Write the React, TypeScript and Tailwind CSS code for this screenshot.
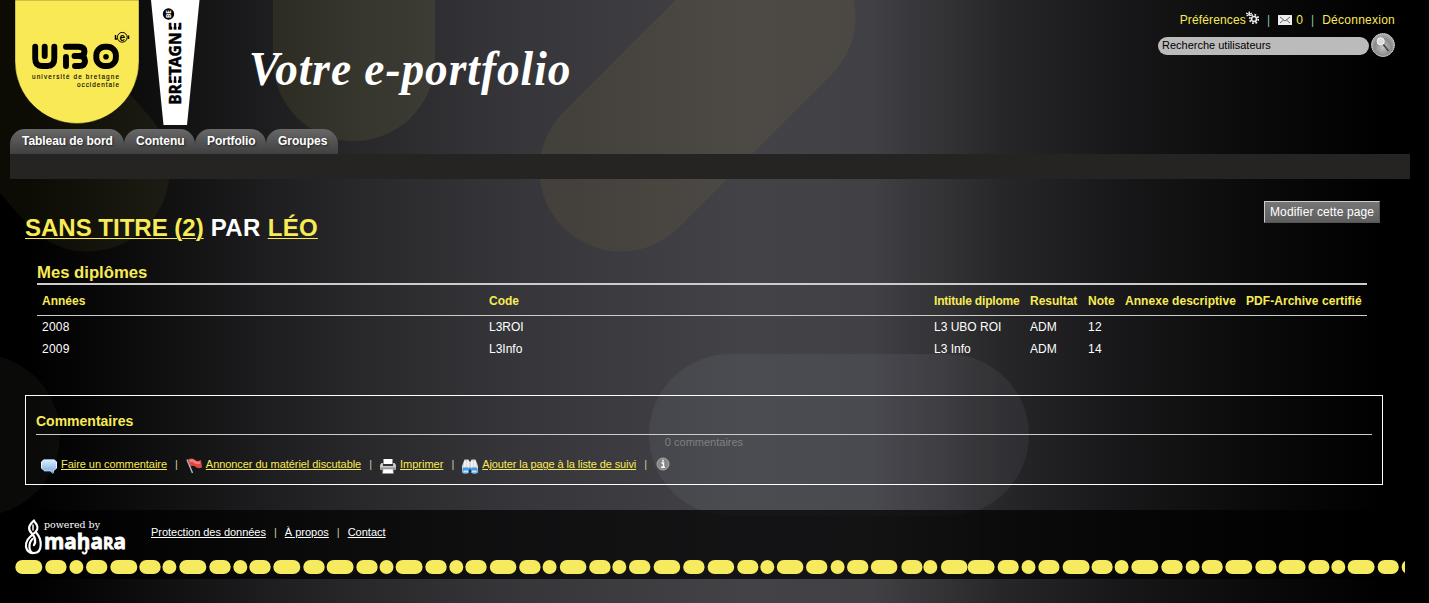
import React from "react";

const DOTS: [number, number][] = [
  [15.3, 27], [45.2, 21.4], [69.4, 14], [86, 21.4], [110.3, 27], [139.3, 21.4], [162.4, 14], [179.3, 27],
  [209.3, 21.4], [233.3, 14], [249.3, 21.4], [273.3, 27], [303.3, 21.4], [326.6, 27], [356.3, 21.4], [379.5, 14],
  [395.6, 27], [425.3, 21.4], [449.3, 14], [465.3, 21.4], [489.8, 26.6], [519.2, 21.4], [542.6, 14], [559.8, 26.6],
  [589.2, 21.4], [612.3, 14], [629, 21.4], [653.6, 26.6], [683.2, 21.4], [707.6, 26.6], [737.2, 21.2], [760.3, 14],
  [776.8, 26.6], [806, 21.4], [830.6, 14], [847, 21.4], [870.8, 26.6], [901.3, 21.2], [923.3, 14], [940.9, 26.6],
  [967.6, 27], [997.6, 21.2], [1021.5, 14], [1038.3, 21.2], [1062.6, 27], [1091.5, 21.2], [1114.6, 14], [1131.3, 27],
  [1161.3, 21.4], [1185.6, 14], [1201.6, 21.2], [1225.3, 27], [1255.3, 21.2], [1278.6, 27], [1308.3, 21.2],
  [1331.3, 14], [1347.6, 27], [1377.6, 21.2], [1401.6, 21.2],
];

function Background() {
  return (
    <svg className="absolute inset-0 -z-10" width="1429" height="603" viewBox="0 0 1429 603" aria-hidden="true">
      <defs>
        <linearGradient id="page" x1="0" y1="0" x2="1429" y2="0" gradientUnits="userSpaceOnUse">
          <stop offset="0.02" stopColor="#000" />
          <stop offset="0.07" stopColor="#080808" />
          <stop offset="0.125" stopColor="#121213" />
          <stop offset="0.19" stopColor="#1e1e20" />
          <stop offset="0.25" stopColor="#28282b" />
          <stop offset="0.36" stopColor="#36363a" />
          <stop offset="0.52" stopColor="#424247" />
          <stop offset="0.61" stopColor="#404045" />
          <stop offset="0.66" stopColor="#333336" />
          <stop offset="0.7" stopColor="#272729" />
          <stop offset="0.78" stopColor="#18181a" />
          <stop offset="0.88" stopColor="#0a0a0a" />
          <stop offset="0.97" stopColor="#000" />
        </linearGradient>
      </defs>
      <rect width="1429" height="603" fill="url(#page)" />
      <path d="M273 0V60A81 81 0 0 0 435 60V0Z" fill="#f8eb55" opacity="0.07" />
      <path d="M-60 0L88 170" stroke="#f8eb55" strokeWidth="163" strokeLinecap="round" opacity="0.05" />
      <path d="M621 170L774 17" stroke="#f8c030" strokeWidth="163" strokeLinecap="round" opacity="0.06" />
      <rect x="649" y="354" width="380" height="162" rx="81" fill="#c8c8dc" opacity="0.07" />
      <rect x="-200" y="354" width="260" height="162" rx="81" fill="#e8f0c8" opacity="0.045" />
    </svg>
  );
}

function UboLogo() {
  return (
    <svg className="ml-[10px] shrink-0" width="134" height="128" viewBox="10 0 134 128" role="img" aria-label="UBO">
      <path d="M15 0V61.500A62 62 0 0 0 139 61.500V0Z" fill="#f8e955" stroke="#000" strokeOpacity=".35" strokeWidth="1" />
      <g fill="none" stroke="#000" strokeWidth="5.900" strokeLinecap="round" strokeLinejoin="round">
        <path d="M35.200 46.800V58.500Q35.200 66 42 66H47.500Q54.300 66 54.300 58.500V46.800M44.700 46.800V56" />
        <path d="M66 46.800H78.500Q84.500 46.800 84.500 51.500Q84.500 56 79 56H74.500M79 56Q85 56 85 61Q85 66 79 66H75M66 57V66" />
        <rect x="96.300" y="46.800" width="19.600" height="19.200" rx="8.500" />
      </g>
      <circle cx="106" cy="56.700" r="2.800" />
      <g fill="none" stroke="#000">
        <circle cx="122.300" cy="37.300" r="4.900" />
        <path d="M115.500 35V39H117M128.500 35.500V39" strokeWidth="1.500" />
      </g>
      <text x="119.500" y="40.500" fontFamily="Liberation Sans" fontWeight="700" fontSize="10">e</text>
      <g fontFamily="Liberation Sans" stroke="#000" strokeWidth=".1" fontSize="6.400">
        <text x="32" y="79" textLength="87">université de bretagne</text>
        <text x="77" y="87" textLength="42">occidentale</text>
      </g>
    </svg>
  );
}

function BretagneLogo() {
  return (
    <svg className="ml-[6px] shrink-0" width="50" height="128" viewBox="150 0 50 128" role="img" aria-label="Bretagne">
      <path d="M151 0H199.500L187 125H163.500Z" fill="#fff" />
      <g transform="translate(180.600 104) rotate(-90)">
        <text x="-0.800 9.600 19.800 28.600 36.800 47.500 59 73.200" stroke="#000" strokeWidth=".5" fontFamily="Open Sans" fontWeight="700" fontSize="15.500">BRETAGNE</text>
        <path d="M20.500 -7.700H28.500M20.500 -3.400H28.500M74 -7.700H83M74 -3.400H83" stroke="#fff" strokeWidth="1.500" />
      </g>
      <circle cx="168.500" cy="14" r="5.700" />
      <text transform="translate(171 18) rotate(-90)" fill="#fff" fontFamily="Open Sans" fontWeight="700" fontSize="6.500">BE</text>
    </svg>
  );
}

function GearIcon() {
  return (
    <svg className="mb-[5px]" width="13" height="13" viewBox="0 0 13 13">
      <g fill="none" stroke="#eee">
        <circle cx="8" cy="8" r="2.500" strokeWidth="1.700" />
        <circle cx="8" cy="8" r="4.300" strokeWidth="1.800" strokeDasharray="1.700 1.670" />
        <path d="M0 2L5 4.500M3 .5L4 5M.5 5L6 2" strokeWidth="1.300" />
      </g>
    </svg>
  );
}

function MailIcon() {
  return (
    <svg width="14" height="10" viewBox="0 0 14 10">
      <rect width="14" height="10" rx=".5" fill="#eee" />
      <path d="M2 2L7 6L12 2M2 8L5.500 5M12 8L8.500 5" fill="none" stroke="#555" strokeWidth=".9" />
    </svg>
  );
}

function SearchButton() {
  return (
    <button aria-label="Rechercher" className="block">
      <svg width="24" height="24" viewBox="0 0 24 24">
        <defs>
          <radialGradient id="glass" cx=".5" cy=".6">
            <stop offset="0" stopColor="#c4c4c4" /><stop offset=".75" stopColor="#8a8a8a" /><stop offset="1" stopColor="#a5a5a5" />
          </radialGradient>
        </defs>
        <circle cx="12" cy="12" r="11.400" fill="url(#glass)" stroke="#eee" strokeDasharray="1.500 .5" />
        <path d="M12 11L17.500 18" stroke="#444" strokeWidth="1.700" />
        <circle cx="9.700" cy="8.300" r="3.600" fill="#ddd" stroke="#f5f5f5" />
      </svg>
    </button>
  );
}

function CommentIcon() {
  return (
    <svg width="16" height="16" viewBox="0 0 16 16">
      <defs><linearGradient id="bubble" x1="0" y1="0" x2="0" y2="1"><stop stopColor="#e3effb" /><stop offset="1" stopColor="#78aadd" /></linearGradient></defs>
      <path d="M3 1.500H13L15.500 4V10L13 12.500H12.500V14.500L9.500 12.500H3L.5 10V4Z" fill="url(#bubble)" stroke="#edf6ff" />
      <path d="M3 13H9L12 15.500V13" fill="none" stroke="#5ba5cc" />
      <path d="M3 1.500H13" stroke="#78a9d4" />
    </svg>
  );
}

function FlagIcon() {
  return (
    <svg width="16" height="16" viewBox="0 0 16 16">
      <path d="M2 1.500Q6 -.5 9 2Q11 4 15 2L16 9.500Q12 11.500 9 8.500Q7 7 4.500 8.500Z" fill="#dc4945" />
      <path d="M3.500 3Q7 1.500 9 4Q11 5.500 14 4.500" stroke="#f0807b" strokeWidth="2.500" fill="none" />
      <path d="M1 1.500L6.500 15" stroke="#b5b5b5" strokeWidth="1.500" />
    </svg>
  );
}

function PrinterIcon() {
  return (
    <svg width="16" height="16" viewBox="0 0 16 16">
      <path d="M3.500 1H12.500V6H3.500Z" fill="#fff" />
      <path d="M1.500 5H3V7H13V5H14.500L16 7V12H0V7Z" fill="#c8c8c8" />
      <path d="M3 6H13V8H3Z" fill="#333" />
      <path d="M0 9.500H16V12H0Z" fill="#999" />
      <path d="M3 11H13L13.500 15.500H2.500Z" fill="#fff" stroke="#888" strokeWidth=".5" />
    </svg>
  );
}

function BinocularsIcon() {
  return (
    <svg width="16" height="16" viewBox="0 0 16 16">
      <path d="M2.500 1.500H6.500L7.500 3.500H8.500L9.500 1.500H13.500L16 8V13.500Q16 15.500 12.500 15.500T9 13.500V10H7V13.500Q7 15.500 3.500 15.500T0 13.500V8Z" fill="#d8d8d8" />
      <path d="M3 3V9M6 3V9M10 3V9M13 3V9" stroke="#fff" strokeWidth="1.200" />
      <rect x=".5" y="9.500" width="6.500" height="5.500" rx="1.500" fill="#3c9cf0" />
      <rect x="9" y="9.500" width="6.500" height="5.500" rx="1.500" fill="#3c9cf0" />
      <path d="M1.500 13.500H6M10 13.500H14.500" stroke="#c5e8ff" strokeWidth="2" />
      <path d="M7 10.500H9" stroke="#3c9cf0" strokeWidth="2" />
    </svg>
  );
}

function InfoIcon() {
  return (
    <svg className="mb-[2px] ml-[1px]" width="14" height="14" viewBox="0 0 14 14">
      <circle cx="7" cy="7" r="6" fill="#888" stroke="#aaa" />
      <path d="M7 2.700V4.700M5.500 6H7.500V10M5 10.200H9" stroke="#fff" strokeWidth="1.400" fill="none" />
    </svg>
  );
}

function MaharaLogo() {
  return (
    <svg className="shrink-0 overflow-visible" width="104" height="38" viewBox="23 518 104 38" role="img" aria-label="powered by mahara">
      <g fill="none" stroke="#fff" strokeLinecap="round">
        <path d="M34 520.500C28 526 28 529 31.500 533C35 537 36.500 541 34 545" strokeWidth="2.300" />
        <path d="M34 521C38.500 526 38.500 529 35.500 532C27 539 25.500 542 26 547C27 552 31 553.500 34 553" strokeWidth="2.200" />
        <path d="M36.500 533C42 539 43 553 34 553C28.500 553 28 543 32.500 539" strokeWidth="2.200" />
        <path d="M33 525V530" strokeWidth="1.500" />
      </g>
      <g fill="#fff">
        <text x="44" y="528" fontFamily="DejaVu Serif" fontSize="9.500" textLength="56" lengthAdjust="spacingAndGlyphs">powered by</text>
        <g stroke="#fff" strokeWidth=".8" fontFamily="Open Sans" fontWeight="700">
          <text x="44" y="549.300" fontSize="21.500" textLength="82" lengthAdjust="spacingAndGlyphs">maha<tspan fontSize="16.500">R</tspan>a</text>
        </g>
        <path d="M85.500 548Q88 552 85 553.500Q83 554 82.500 551.500" fill="none" stroke="#fff" strokeWidth="2" />
      </g>
    </svg>
  );
}

function Separator() {
  return <span className="mx-2 text-[#c3d0a0]">|</span>;
}

function Tab({ children, className }: { children: string; className: string }) {
  return (
    <a className={"h-[25px] rounded-t-[15px] bg-linear-to-b from-[#686868] to-[#404040] pl-3 text-xs leading-[24px] font-bold whitespace-nowrap text-white [text-shadow:1px_1px_2px_#222] " + className}>
      {children}
    </a>
  );
}

function Action({ icon, children, className }: { icon: React.ReactNode; children: string; className: string }) {
  return (
    <span className="flex shrink-0 items-center whitespace-nowrap">
      <span className="mr-1 pt-[3px]">{icon}</span>
      <a className={"text-[#f8eb55] underline " + className}>{children}</a>
    </span>
  );
}

export default function App() {
  return (
    <div className="relative isolate h-[603px] w-[1429px] overflow-hidden font-['Liberation_Sans',Arial,sans-serif] text-white">
      <Background />

      <header className="flex h-[129px]">
        <UboLogo />
        <BretagneLogo />
        <h1 className="mt-[41px] ml-[49px] w-[340px] origin-left scale-x-[.943] font-['Liberation_Serif',serif] text-[48px] leading-[56px] font-bold tracking-[1.05px] whitespace-nowrap italic">
          Votre e-portfolio
        </h1>
        <div className="mt-[12px] mr-[33px] ml-auto flex w-[238px] flex-col items-end self-start pr-[1px]">
          <nav className="flex h-4 items-center text-xs tracking-[0.13px] text-[#f8eb55]">
            <a>Préférences</a>
            <GearIcon />
            <span className="mx-[8px] text-[#7ec8a8]">|</span>
            <MailIcon />
            <a className="ml-1">0</a>
            <span className="mx-[8px] text-[#7ec8a8]">|</span>
            <a className="tracking-[0.25px]">Déconnexion</a>
          </nav>
          <div className="mt-[5px] flex items-center gap-[2px]">
            <div className="mt-[2px] h-[18px] w-[211px] rounded-full bg-[#bbb] pl-1 text-[11px] leading-[17px] text-black">Recherche utilisateurs</div>
            <SearchButton />
          </div>
        </div>
      </header>

      <nav className="ml-[10px] flex">
        <Tab className="w-[114px] tracking-[-0.060px]">Tableau de bord</Tab>
        <Tab className="w-[71px]">Contenu</Tab>
        <Tab className="w-[71px] tracking-[-0.100px]">Portfolio</Tab>
        <Tab className="w-[72px]">Groupes</Tab>
      </nav>
      <div className="ml-[10px] h-[25px] w-[1400px] bg-[#252422]" />

      <main className="ml-[25px] w-[1358px]">
        <div className="flex h-[78px] items-start justify-between pr-[3px]">
          <h2 className="mt-[34px] text-2xl leading-[30px] font-bold">
            <a className="text-[#f8eb55] underline decoration-1 underline-offset-2">SANS TITRE (2)</a>
            <span className="tracking-[0.35px]"> PAR </span>
            <a className="tracking-[0.3px] text-[#f8eb55] underline decoration-1 underline-offset-2">LÉO</a>
          </h2>
          <button className="mt-[22px] h-[22px] w-[116px] border border-t-[#ccc] border-r-[#555] border-b-[#555] border-l-[#ccc] bg-linear-to-b from-[#767676] to-[#5e5e5e] text-xs tracking-[0.1px] whitespace-nowrap">
            Modifier cette page
          </button>
        </div>

        <section className="ml-3 h-[138px] w-[1330px]">
          <h3 className="h-[28px] border-b-2 border-[#ccc] pt-[6px] text-[16.700px] leading-[20px] font-bold text-[#f8eb55]">Mes diplômes</h3>
          <table className="w-full table-fixed border-collapse text-left text-xs">
            <colgroup>
              <col className="w-[447px]" /><col className="w-[445px]" /><col className="w-[96px]" /><col className="w-[58px]" />
              <col className="w-[37px]" /><col className="w-[121px]" /><col className="w-[126px]" />
            </colgroup>
            <thead>
              <tr className="h-[30px] border-b border-[#ccc] whitespace-nowrap text-[#f8eb55] [&>th]:pt-[3px] [&>th]:pl-[5px]">
                <th>Années</th><th>Code</th><th className="tracking-[-0.200px]">Intitule diplome</th><th>Resultat</th><th>Note</th><th className="tracking-[0.050px]">Annexe descriptive</th><th className="tracking-[0.050px]">PDF-Archive certifié</th>
              </tr>
            </thead>
            <tbody className="[&_td]:pl-[5px]">
              <tr className="h-[23px] [&>td]:pt-[1px]"><td className="tracking-[0.250px]">2008</td><td>L3ROI</td><td>L3 UBO ROI</td><td>ADM</td><td className="tracking-[0.250px]">12</td><td /><td /></tr>
              <tr className="h-[22px]"><td className="tracking-[0.250px]">2009</td><td>L3Info</td><td>L3 Info</td><td>ADM</td><td className="tracking-[0.250px]">14</td><td /><td /></tr>
            </tbody>
          </table>
        </section>

        <section className="h-[90px] w-[1358px] border border-white px-[10px] text-[11px]">
          <h3 className="h-[39px] border-b border-[#ccc] pt-[15px] text-sm leading-[20px] font-bold text-[#f8eb55]">Commentaires</h3>
          <p className="text-center leading-[14px] text-[#808080]">0 commentaires</p>
          <div className="ml-[5px] flex h-[17px] items-center pt-[14px]">
            <Action className="tracking-[-0.050px]" icon={<CommentIcon />}>Faire un commentaire</Action>
            <Separator />
            <Action className="tracking-[-0.060px]" icon={<FlagIcon />}>Annoncer du matériel discutable</Action>
            <Separator />
            <Action className="" icon={<PrinterIcon />}>Imprimer</Action>
            <Separator />
            <Action className="tracking-[-0.110px]" icon={<BinocularsIcon />}>Ajouter la page à la liste de suivi</Action>
            <Separator />
            <InfoIcon />
          </div>
        </section>
      </main>

      <footer className="mt-[25px] ml-[10px] h-[69px] w-[1400px] rounded-[15px] bg-black/70">
        <div className="flex h-[50px] pt-[8px] pl-[13px]">
          <MaharaLogo />
          <nav className="ml-[24px] pt-[6px] text-[11px] leading-[16px]">
            <a className="tracking-[-0.030px] underline">Protection des données</a><Separator /><a className="underline">À propos</a><Separator /><a className="underline">Contact</a>
          </nav>
        </div>
        <svg className="ml-[5px]" width="1390" height="14" viewBox="15 0 1390 14" aria-hidden="true">
          {DOTS.map(([x, w]) => <rect key={x} x={x} y="0" width={w} height="14" rx="7" fill="#f6eb5f" />)}
        </svg>
      </footer>
    </div>
  );
}
